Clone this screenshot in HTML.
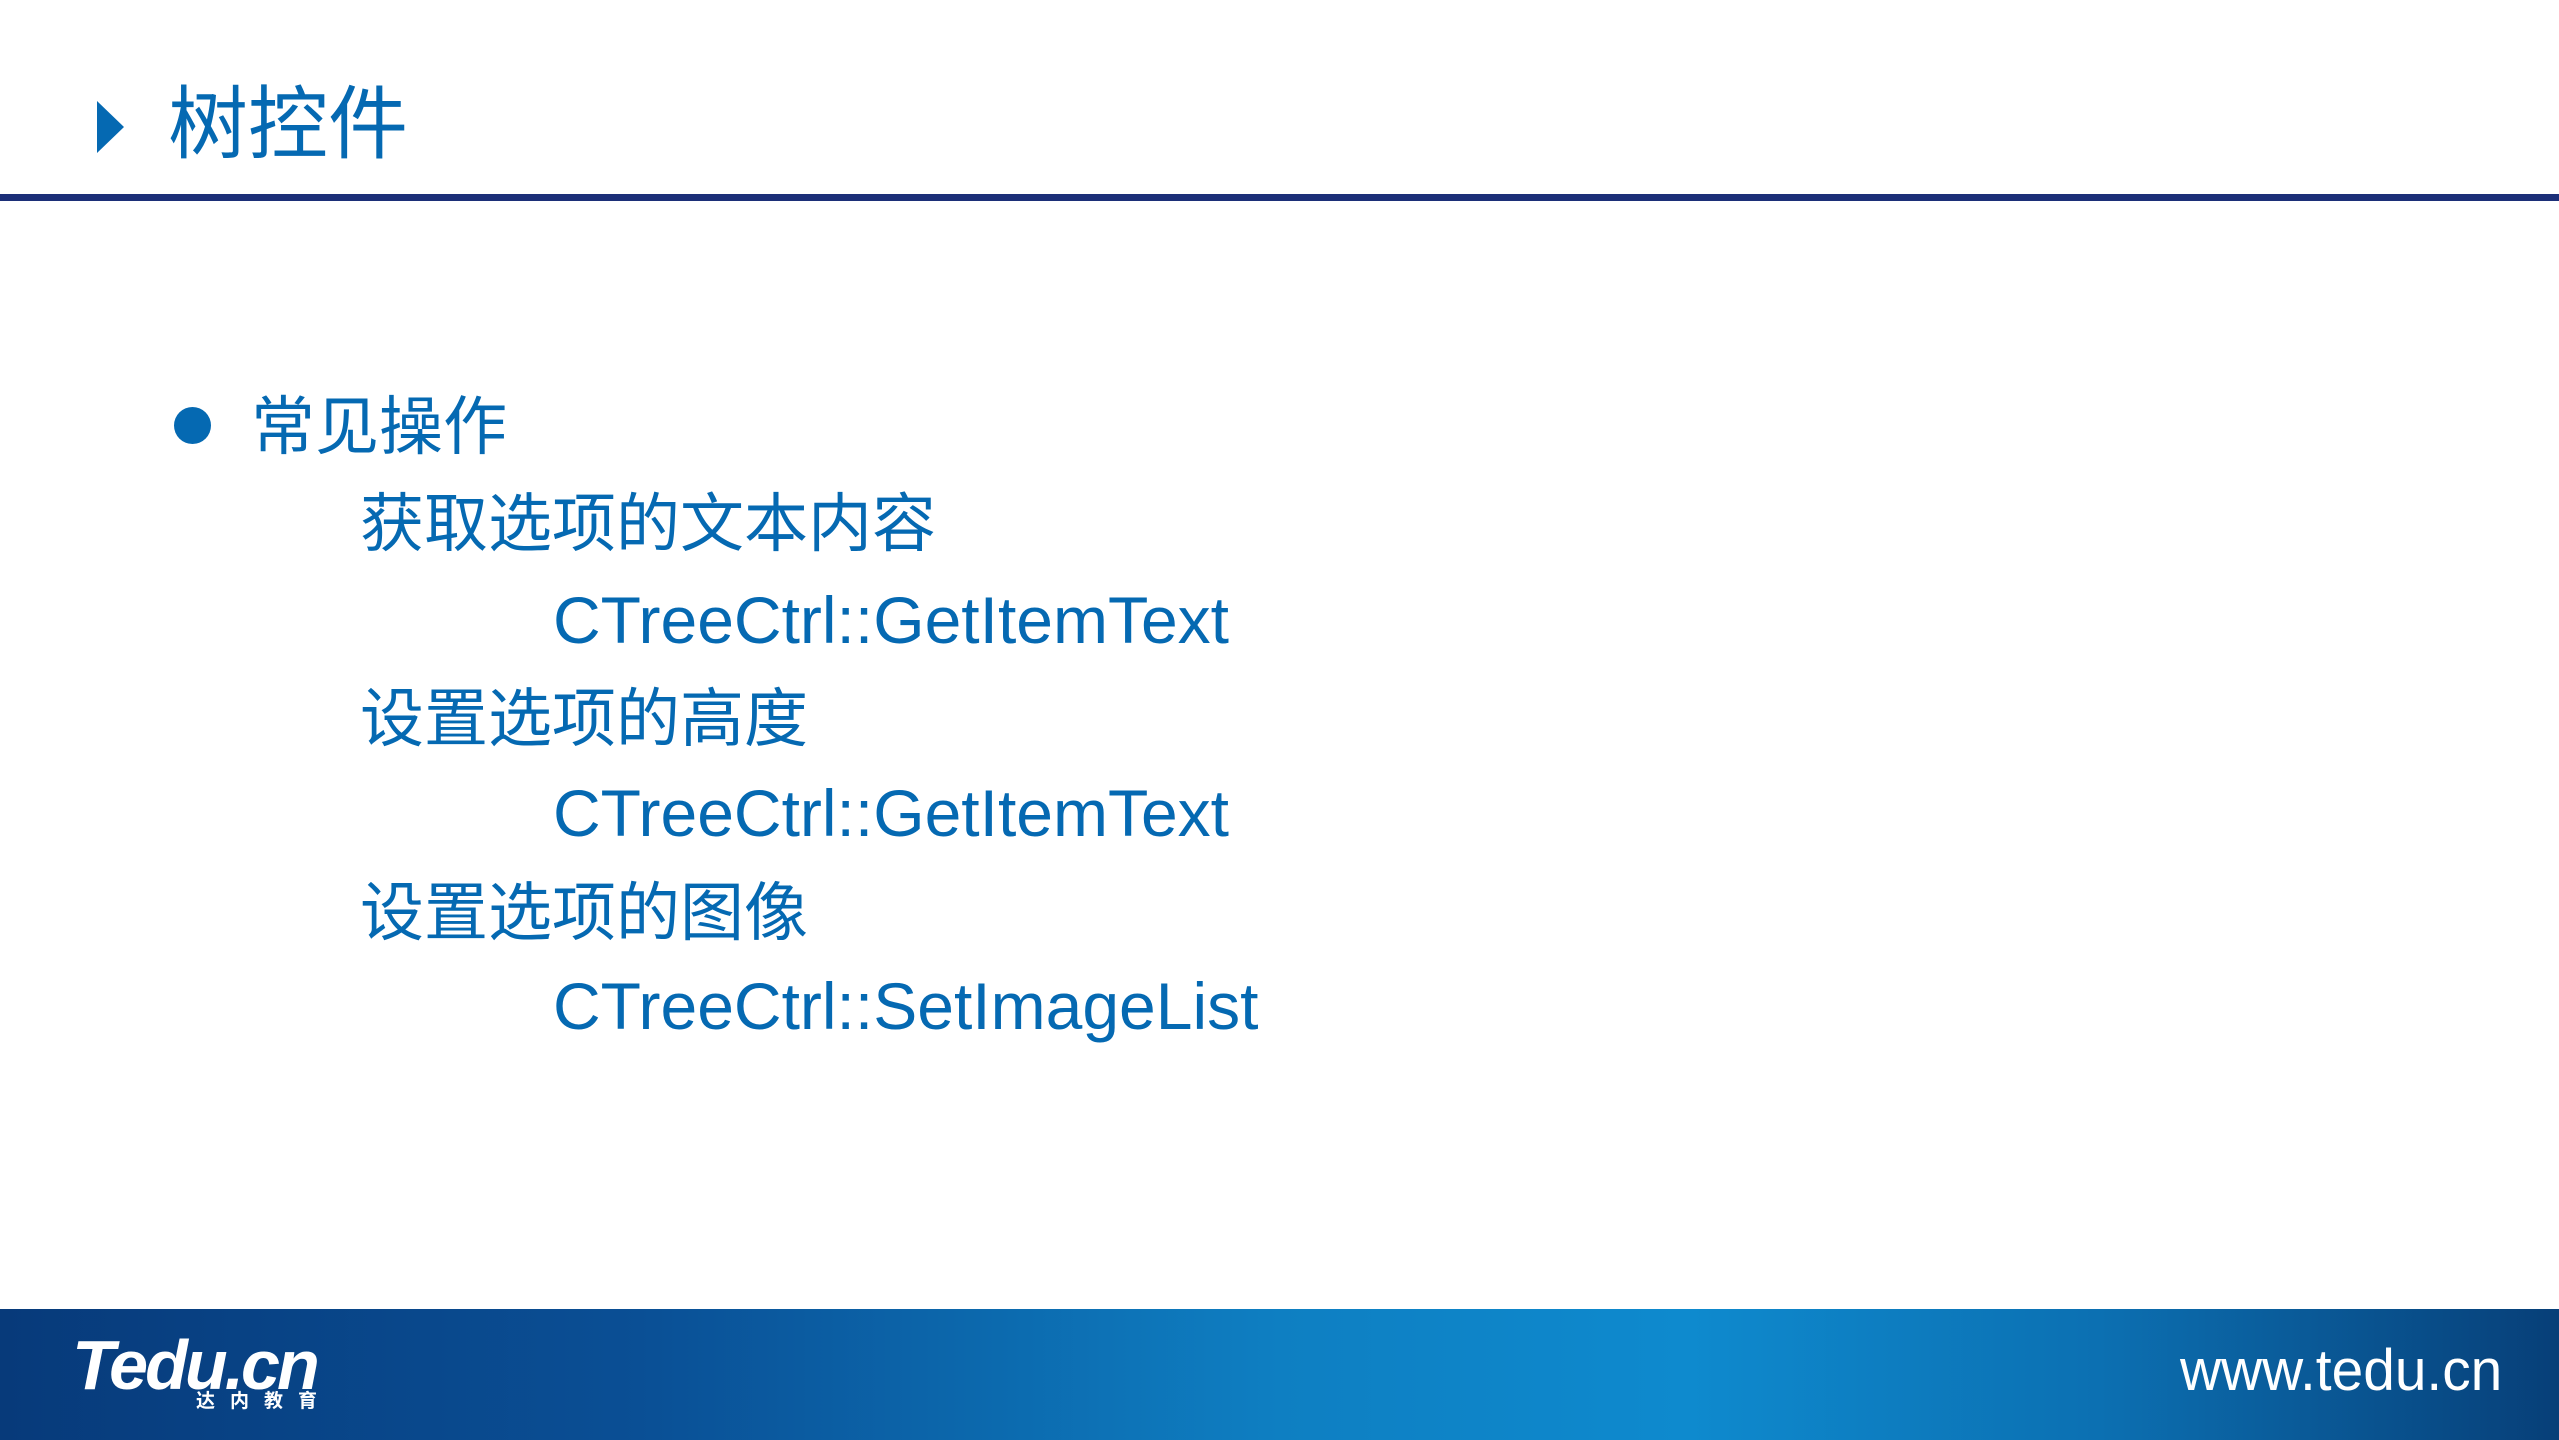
<!DOCTYPE html>
<html><head><meta charset="utf-8"><style>
body{margin:0;width:2559px;height:1440px;position:relative;background:#fff;overflow:hidden;font-family:"Liberation Sans","Noto Sans CJK SC",sans-serif;color:#0569b2}
.a{position:absolute;white-space:nowrap;line-height:1}
.cj{font-size:64px}
.code{font-size:66px;letter-spacing:0}
</style></head><body>
<svg class="a" style="left:0;top:0" width="200" height="200"><polygon points="97,101 124,127 97,153" fill="#0569b2"/></svg>
<div class="a" style="left:168px;top:85px;font-size:80px">树控件</div>
<div class="a" style="left:0;top:194px;width:2559px;height:7px;background:#1c2f78"></div>
<div class="a" style="left:174px;top:407px;width:37px;height:37px;border-radius:50%;background:#0569b2"></div>
<div class="a cj" style="left:251px;top:395px">常见操作</div>
<div class="a cj" style="left:360px;top:492px">获取选项的文本内容</div>
<div class="a code" style="left:553px;top:587px">CTreeCtrl::GetItemText</div>
<div class="a cj" style="left:360px;top:687px">设置选项的高度</div>
<div class="a code" style="left:553px;top:780px">CTreeCtrl::GetItemText</div>
<div class="a cj" style="left:360px;top:881px">设置选项的图像</div>
<div class="a code" style="left:553px;top:973px">CTreeCtrl::SetImageList</div>
<div class="a" style="left:0;top:1309px;width:2559px;height:131px;background:linear-gradient(90deg,#073a7a 0%,#0a4f95 25%,#0e7fc2 50%,#0e8ace 66%,#0c70b2 82%,#073f78 100%)"></div>
<div class="a" style="left:72px;top:1330px;font-size:70px;font-weight:bold;font-style:italic;color:#fff;letter-spacing:-3px">Tedu.cn</div>
<div class="a" style="left:196px;top:1392px;font-size:19px;font-weight:bold;color:#fff;letter-spacing:15px">达内教育</div>
<div class="a" style="left:2180px;top:1342px;font-size:58px;color:#fff;transform:scaleX(0.98);transform-origin:left">www.tedu.cn</div>
</body></html>
